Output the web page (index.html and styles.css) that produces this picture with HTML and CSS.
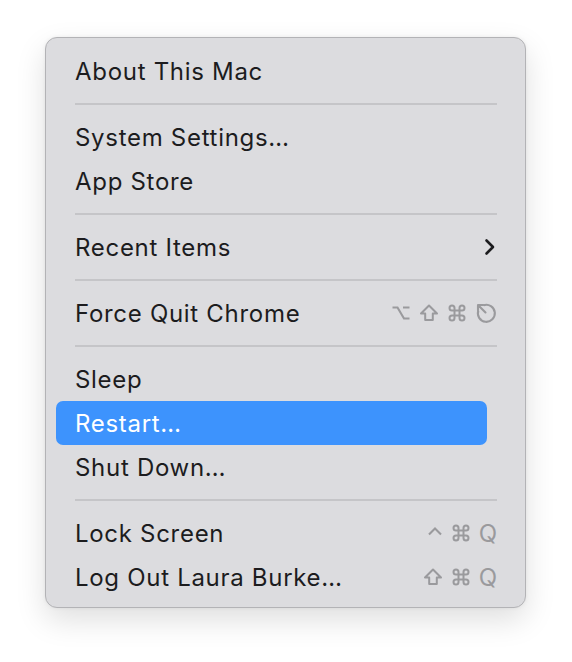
FILE: index.html
```html
<!DOCTYPE html>
<html>
<head>
<meta charset="utf-8">
<link rel="stylesheet" href="styles.css">
</head>
<body>
<div class="menu">
  <div class="item"><span class="label">About This Mac</span></div>
  <div class="sep"></div>
  <div class="item"><span class="label">System Settings…</span></div>
  <div class="item"><span class="label">App Store</span></div>
  <div class="sep"></div>
  <div class="item"><span class="label">Recent Items</span>
    <svg class="chev" width="12" height="18" viewBox="0 0 12 18"><path d="M2.5 2.5 L9 9 L2.5 15.5" fill="none" stroke="#1c1c1e" stroke-width="2.6" stroke-linecap="round" stroke-linejoin="round"/></svg>
  </div>
  <div class="sep"></div>
  <div class="item"><span class="label">Force Quit Chrome</span>
    <span class="keys">
      <svg class="k" width="20" height="20" viewBox="0 0 20 20"><path d="M1.5 4.5 H6.5 L13 15.5 H18.5 M12 4.5 H18.5" fill="none" stroke="#9a9a9d" stroke-width="2.1"/></svg>
      <svg class="k" width="20" height="20" viewBox="0 0 20 20"><path d="M10 2.5 L18 10.5 H13.8 V17 H6.2 V10.5 H2 Z" fill="none" stroke="#9a9a9d" stroke-width="2" stroke-linejoin="round"/></svg>
      <svg class="k" width="20" height="20" viewBox="0 0 24 24"><path d="M18 3a3 3 0 0 0-3 3v12a3 3 0 0 0 3 3 3 3 0 0 0 3-3 3 3 0 0 0-3-3H6a3 3 0 0 0-3 3 3 3 0 0 0 3 3 3 3 0 0 0 3-3V6a3 3 0 0 0-3-3 3 3 0 0 0-3 3 3 3 0 0 0 3 3h12a3 3 0 0 0 3-3 3 3 0 0 0-3-3z" fill="none" stroke="#9a9a9d" stroke-width="2.4"/></svg>
      <svg class="k" width="22" height="22" viewBox="0 0 22 22"><path d="M8.6 3.3 A8.5 8.5 0 1 1 3.3 8.6" fill="none" stroke="#9a9a9d" stroke-width="2.1"/><path d="M3 3 L10.5 10.5 M3 3 V8.3 M3 3 H8.3" fill="none" stroke="#9a9a9d" stroke-width="2.1" stroke-linecap="round"/></svg>
    </span>
  </div>
  <div class="sep"></div>
  <div class="item"><span class="label">Sleep</span></div>
  <div class="item active"><span class="label">Restart…</span></div>
  <div class="item"><span class="label">Shut Down…</span></div>
  <div class="sep"></div>
  <div class="item"><span class="label">Lock Screen</span>
    <span class="keys">
      <svg class="k" width="16" height="20" viewBox="0 0 16 20"><path d="M2 11.5 L8 5.5 L14 11.5" fill="none" stroke="#9a9a9d" stroke-width="2.1"/></svg>
      <svg class="k" width="20" height="20" viewBox="0 0 24 24"><path d="M18 3a3 3 0 0 0-3 3v12a3 3 0 0 0 3 3 3 3 0 0 0 3-3 3 3 0 0 0-3-3H6a3 3 0 0 0-3 3 3 3 0 0 0 3 3 3 3 0 0 0 3-3V6a3 3 0 0 0-3-3 3 3 0 0 0-3 3 3 3 0 0 0 3 3h12a3 3 0 0 0 3-3 3 3 0 0 0-3-3z" fill="none" stroke="#9a9a9d" stroke-width="2.4"/></svg>
      <span class="q">Q</span>
    </span>
  </div>
  <div class="item"><span class="label">Log Out Laura Burke…</span>
    <span class="keys">
      <svg class="k" width="20" height="20" viewBox="0 0 20 20"><path d="M10 2.5 L18 10.5 H13.8 V17 H6.2 V10.5 H2 Z" fill="none" stroke="#9a9a9d" stroke-width="2" stroke-linejoin="round"/></svg>
      <svg class="k" width="20" height="20" viewBox="0 0 24 24"><path d="M18 3a3 3 0 0 0-3 3v12a3 3 0 0 0 3 3 3 3 0 0 0 3-3 3 3 0 0 0-3-3H6a3 3 0 0 0-3 3 3 3 0 0 0 3 3 3 3 0 0 0 3-3V6a3 3 0 0 0-3-3 3 3 0 0 0-3 3 3 3 0 0 0 3 3h12a3 3 0 0 0 3-3 3 3 0 0 0-3-3z" fill="none" stroke="#9a9a9d" stroke-width="2.4"/></svg>
      <span class="q">Q</span>
    </span>
  </div>
</div>
</body>
</html>
```
FILE: styles.css
```css
html, body {
  margin: 0;
  padding: 0;
  background: #ffffff;
}
body {
  width: 572px;
  height: 662px;
  font-family: Inter, "Liberation Sans", sans-serif;
  padding-top: 37px;
  padding-left: 45px;
  box-sizing: border-box;
}
.menu {
  width: 481px;
  box-sizing: border-box;
  background: #dcdcdf;
  border: 1px solid #b3b3b6;
  border-radius: 12px;
  padding: 11px 0 8px 0;
  box-shadow: 0 12px 30px rgba(0, 0, 0, 0.13), 0 0 4px rgba(0, 0, 0, 0.06);
}
.item {
  height: 44px;
  display: flex;
  align-items: center;
  justify-content: space-between;
  padding: 0 29px 0 29px;
  font-size: 24px;
  color: #1c1c1e;
  letter-spacing: 0.7px;
}
.item.active {
  background: #3d93fd;
  color: #ffffff;
  border-radius: 7px;
  margin: 0 38px 0 10px;
  padding-left: 19px;
}
.label {
  line-height: 1;
  padding-top: 2px;
}
.sep {
  height: 2px;
  margin: 10px 28px 10px 29px;
  background: #c5c5c8;
}
.keys {
  display: flex;
  align-items: center;
  gap: 8px;
  margin-right: -1px;
  letter-spacing: 0;
}
.k {
  display: block;
}
.q {
  font-size: 24px;
  color: #9a9a9d;
  line-height: 1;
  padding-top: 2px;
}
```
